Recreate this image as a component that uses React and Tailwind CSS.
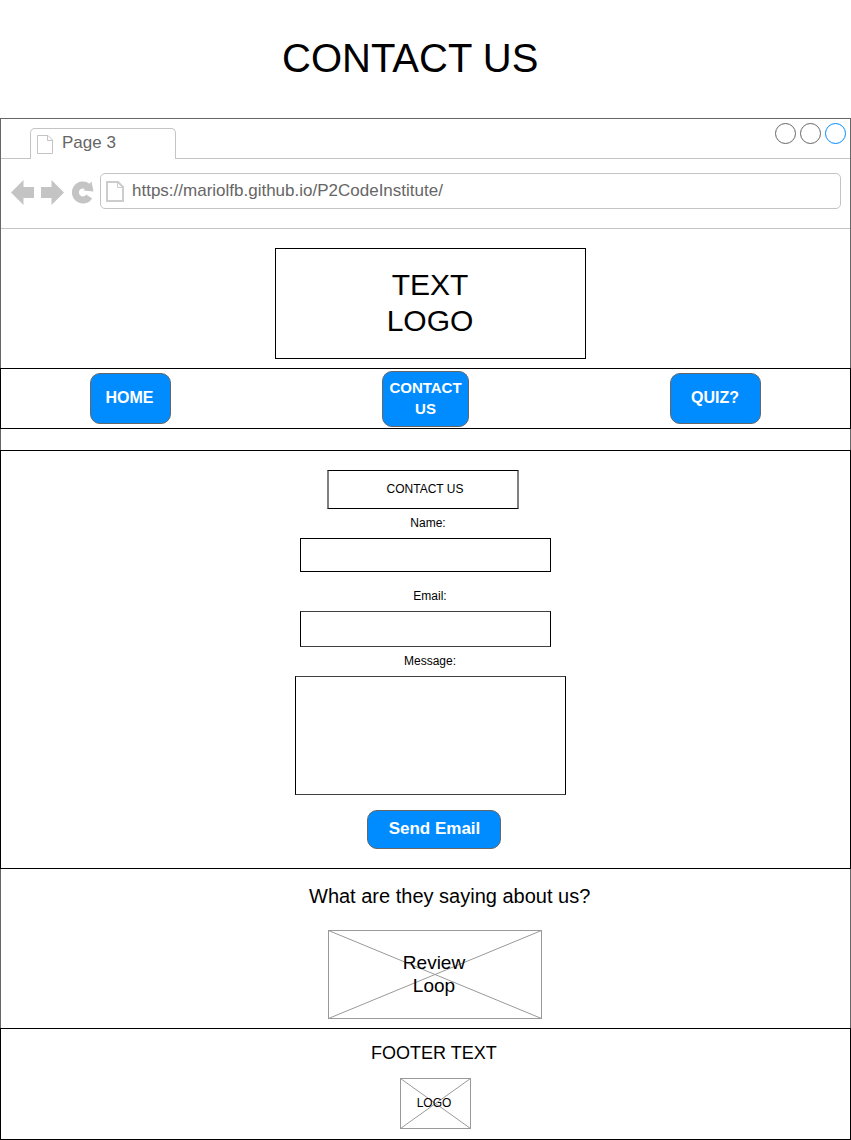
const Page = ({ className, width, height, fold, stroke, strokeWidth = 1 }) => (
  <svg className={className} width={width} height={height} fill="none" stroke={stroke} strokeWidth={strokeWidth}>
    <path
      d={`M${strokeWidth / 2} ${strokeWidth / 2}H${width - fold}L${width - strokeWidth / 2} ${fold}V${height - strokeWidth / 2}H${strokeWidth / 2}Z`}
    />
    <path strokeWidth="1" d={`M${width - fold - 0.5} 1V${fold + 0.5}H${width - 1}`} />
  </svg>
);

const Crossed = ({ width, height, className, children }) => (
  <div className={"relative flex shrink-0 items-center justify-center " + className}>
    <svg className="absolute inset-0" width={width} height={height} fill="none" stroke="#999999">
      <rect x="0.5" y="0.5" width={width - 1} height={height - 1} />
      <path d={`M0.5 0.5L${width - 0.5} ${height - 0.5}M${width - 0.5} 0.5L0.5 ${height - 0.5}`} />
    </svg>
    {children}
  </div>
);

const Tabs = () => (
  <div className="flex h-10 shrink-0 items-start justify-between border-b border-[#c4c4c4]">
    <div className="mt-[9px] ml-[29px] flex h-[31px] w-[146px] shrink-0 rounded-t-[5px] border border-b-0 border-[#c4c4c4] bg-white">
      <Page className="mt-1.5 ml-1.5" width={16} height={19} fold={5} stroke="#c4c4c4" />
      <span className="mt-1 ml-[9px] text-[17px] leading-5 text-[#666666]">Page 3</span>
    </div>
    <div className="mt-1 mr-1 flex gap-1">
      <i className="size-[21px] rounded-full border border-[#666666]" />
      <i className="size-[21px] rounded-full border border-[#666666]" />
      <i className="size-[21px] rounded-full border border-[#008cff]" />
    </div>
  </div>
);

const Toolbar = () => (
  <div className="flex h-[70px] shrink-0 items-start border-b border-[#c4c4c4] pt-3.5">
    <svg className="mt-1.5 ml-2.5 shrink-0" width="84" height="27" fill="#c4c4c4">
      <path d="M0 13.5L12.5 1V8H23V19H12.5V26Z" />
      <path d="M53 13.5L40.500 1V8H30V19H40.500V26Z" />
      <path d="M78.200 17.500A7.500 7.500 0 1 1 76.500 7.500" fill="none" stroke="#c4c4c4" strokeWidth="7" />
      <path d="M80.500 2.500L82.500 12.500L72.500 11.500Z" />
    </svg>
    <div className="ml-[5px] flex h-9 w-[741px] shrink-0 rounded-[5px] border border-[#c4c4c4]">
      <Page className="mt-[7px] ml-[5px]" width={18} height={21} fold={6} stroke="#cccccc" strokeWidth={2} />
      <span className="mt-[7px] ml-2 text-[17px] leading-5 text-[#666666]">https://mariolfb.github.io/P2CodeInstitute/</span>
    </div>
  </div>
);

const button = "flex shrink-0 items-center justify-center rounded-[10px] border border-[#666666] bg-[#008cff] text-center font-bold text-white ";

export default function App() {
  return (
    <div className="flex h-[1140px] w-[851px] flex-col overflow-hidden bg-white font-['Liberation_Sans',Arial,sans-serif] text-black">
      <h1 className="h-[118px] shrink-0 pt-[34px] pl-[282px] text-[40px] leading-[48px]">CONTACT US</h1>
      <div className="flex h-[1022px] flex-col border-x border-t border-[#666666]">
        <Tabs />
        <Toolbar />
        <div className="h-[139px] shrink-0 pt-[19px] pl-[274px]">
          <div className="flex h-[111px] w-[311px] items-center justify-center border border-black pr-px pb-0.5 text-center text-[30px] leading-9">
            TEXT<br />LOGO
          </div>
        </div>
        <nav className="-mx-px flex h-[61px] shrink-0 items-start border border-black pl-[89px]">
          <div className={button + "mt-1 h-[51px] w-[81px] pr-0.5 pb-px text-[16px]"}>HOME</div>
          <div className={button + "mt-[1.5px] ml-[211px] h-[56px] w-[87px] pb-px text-[15px] leading-[21px]"}>
            CONTACT<br />US
          </div>
          <div className={button + "mt-1 ml-[201px] h-[51px] w-[91px] pr-px pb-px text-[16px]"}>QUIZ?</div>
        </nav>
        <form className="-mx-px mt-[21px] flex h-[419px] shrink-0 flex-col items-start border border-black text-[12px] leading-[14px]">
          <div className="mt-[19px] ml-[326px] flex h-[39px] w-48 shrink-0 items-center justify-center border border-x-2 border-black border-x-[#808080] pb-0.5 pl-1">
            CONTACT US
          </div>
          <label className="mt-[7px] w-[854px] shrink-0 text-center">Name:</label>
          <div className="mt-2 ml-[299px] h-[34px] w-[251px] shrink-0 border border-black" />
          <label className="mt-[17px] w-[858px] shrink-0 text-center">Email:</label>
          <div className="mt-2 ml-[299px] h-9 w-[251px] shrink-0 border border-black border-y-[#404040]" />
          <label className="mt-[7px] w-[858px] shrink-0 text-center">Message:</label>
          <div className="mt-2 ml-[294px] h-[119px] w-[271px] shrink-0 border border-black border-y-[#404040]" />
          <div className={button + "mt-[15px] ml-[366px] h-[39px] w-[134px] pb-0.5 pl-px text-[17px]"}>Send Email</div>
        </form>
        <section className="h-[159px] shrink-0">
          <h2 className="pt-[15px] pl-[308px] text-[20px] leading-6">What are they saying about us?</h2>
          <Crossed width={214} height={89} className="mt-[22px] ml-[327px] h-[89px] w-[214px]">
            <p className="relative pr-0.5 pb-0.5 text-center text-[19px] leading-[23px]">Review<br />Loop</p>
          </Crossed>
        </section>
        <footer className="-mx-px h-28 shrink-0 border border-black">
          <p className="pt-[13px] pl-[370px] text-[18px] leading-[22px]">FOOTER TEXT</p>
          <Crossed width={71} height={51} className="mt-3.5 ml-[399px] h-[51px] w-[71px]">
            <span className="relative pr-[3px] pb-0.5 text-[12px] leading-[14px]">LOGO</span>
          </Crossed>
        </footer>
      </div>
    </div>
  );
}
